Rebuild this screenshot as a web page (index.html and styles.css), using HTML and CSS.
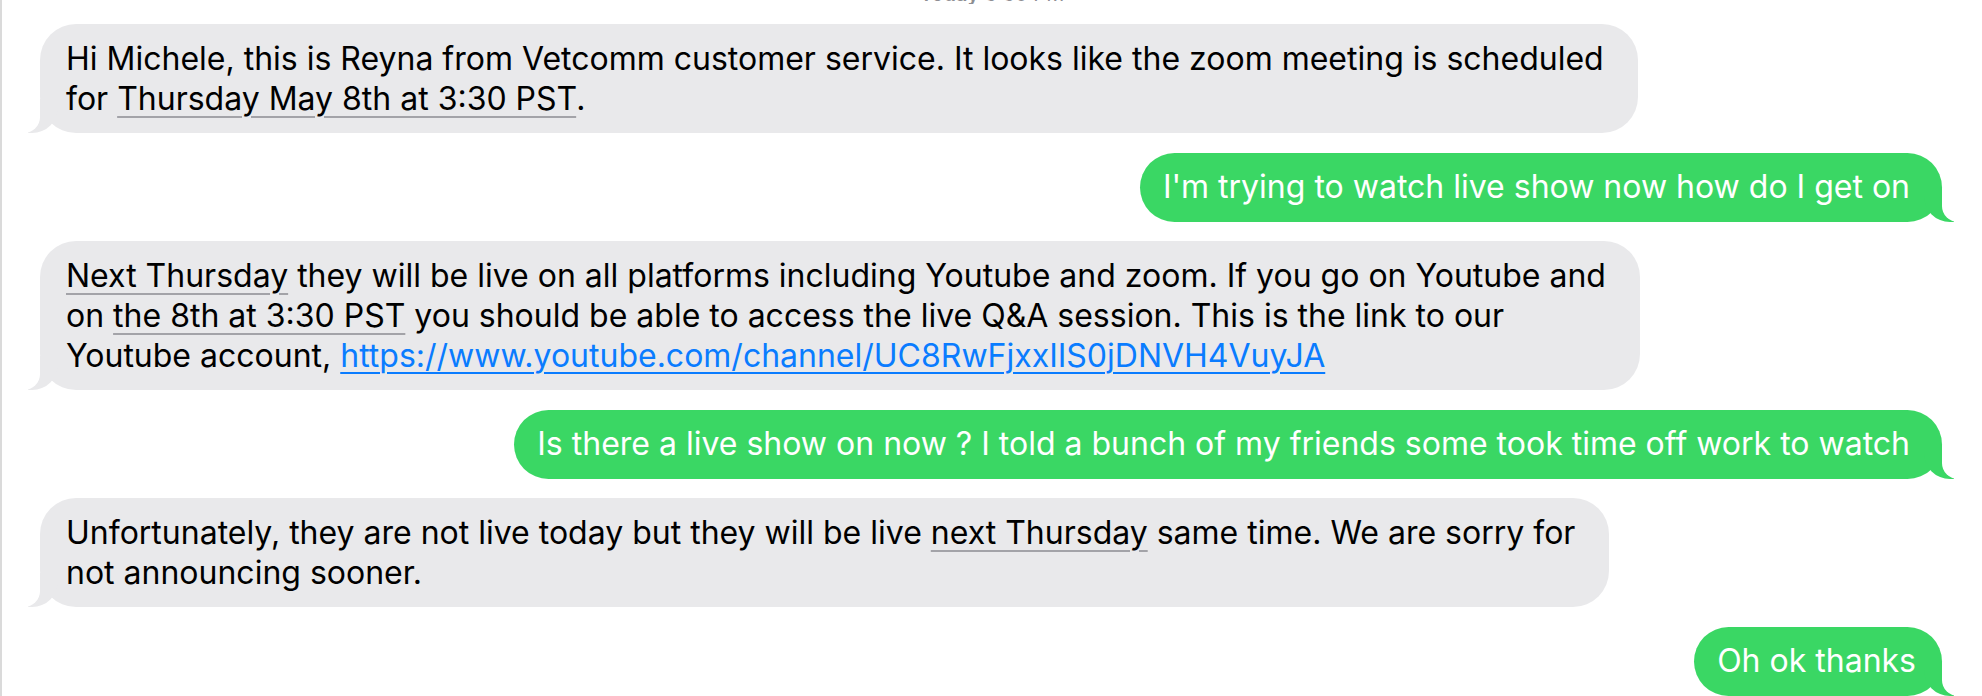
FILE: index.html
```html
<!DOCTYPE html>
<html>
<head>
<meta charset="utf-8">
<title>Messages</title>
<link rel="stylesheet" href="styles.css">
</head>
<body>
<div class="screen">
  <div class="stamp"><span class="stamp-text"><b>Today</b> 3:30 PM</span></div>
  <div class="thread">
    <div class="bubble them">Hi Michele, this is Reyna from Vetcomm customer service. It looks like the zoom meeting is scheduled<br>for <span class="detect">Thursday May 8th at 3:30 PST</span>.</div>
    <div class="bubble me wide">I'm trying to watch live show now how do I get on</div>
    <div class="bubble them"><span class="detect">Next Thursday</span> they will be live on all platforms including Youtube and zoom. If you go on Youtube and<br>on <span class="detect">the 8th at 3:30 PST</span> you should be able to access the live Q&amp;A session. This is the link to our<br>Youtube account, <a class="link" href="#">https://www.youtube.com/channel/UC8RwFjxxIIS0jDNVH4VuyJA</a></div>
    <div class="bubble me wide">Is there a live show on now ? I told a bunch of my friends some took time off work to watch</div>
    <div class="bubble them">Unfortunately, they are not live today but they will be live <span class="detect">next Thursday</span> same time. We are sorry for<br>not announcing sooner.</div>
    <div class="bubble me">Oh ok thanks</div>
  </div>
</div>
</body>
</html>
```
FILE: styles.css
```css
html, body {
  margin: 0;
  padding: 0;
  background: #ffffff;
}

body {
  font-family: "Inter", "Noto Sans", "Liberation Sans", sans-serif;
  -webkit-font-smoothing: antialiased;
}

.screen {
  box-sizing: border-box;
  min-height: 100vh;
  border-left: 2px solid #dadada;
  overflow: hidden;
}

.stamp {
  height: 4px;
  overflow: hidden;
  display: flex;
  justify-content: center;
  align-items: flex-end;
}

.stamp-text {
  font-size: 20px;
  line-height: 1;
  color: #8e8e93;
}

.stamp-text b {
  font-weight: 600;
}

.thread {
  display: flex;
  flex-direction: column;
  gap: 19.5px;
  padding: 20px 40px 20px 38px;
}

.bubble {
  position: relative;
  width: fit-content;
  box-sizing: border-box;
  font-size: 32px;
  line-height: 40px;
  padding: 14.5px 34px 14.5px 26px;
  border-radius: 36px;
  white-space: nowrap;
}

.them {
  align-self: flex-start;
  background: #e9e9eb;
  color: #000000;
}

.me {
  align-self: flex-end;
  background: #3ad764;
  color: #ffffff;
  padding-left: 23px;
  padding-right: 26px;
}

.me.wide {
  padding-right: 32px;
}

/* tails */
.them::before,
.them::after,
.me::before,
.me::after {
  content: "";
  position: absolute;
  bottom: 0;
  height: 34px;
}

.them::before {
  left: -12px;
  width: 30px;
  background: #e9e9eb;
  border-bottom-right-radius: 26px;
}

.them::after {
  left: -24px;
  width: 24px;
  background: #ffffff;
  border-bottom-right-radius: 16px;
}

.me::before {
  right: -12px;
  width: 30px;
  background: #3ad764;
  border-bottom-left-radius: 26px;
}

.me::after {
  right: -24px;
  width: 24px;
  background: #ffffff;
  border-bottom-left-radius: 16px;
}

.detect {
  text-decoration: underline;
  text-decoration-color: #a3a3a8;
  text-decoration-thickness: 2px;
  text-underline-offset: 6px;
}

.link {
  color: #0a7cff;
  text-decoration: underline;
  text-decoration-thickness: 2px;
  text-underline-offset: 5px;
}
```
